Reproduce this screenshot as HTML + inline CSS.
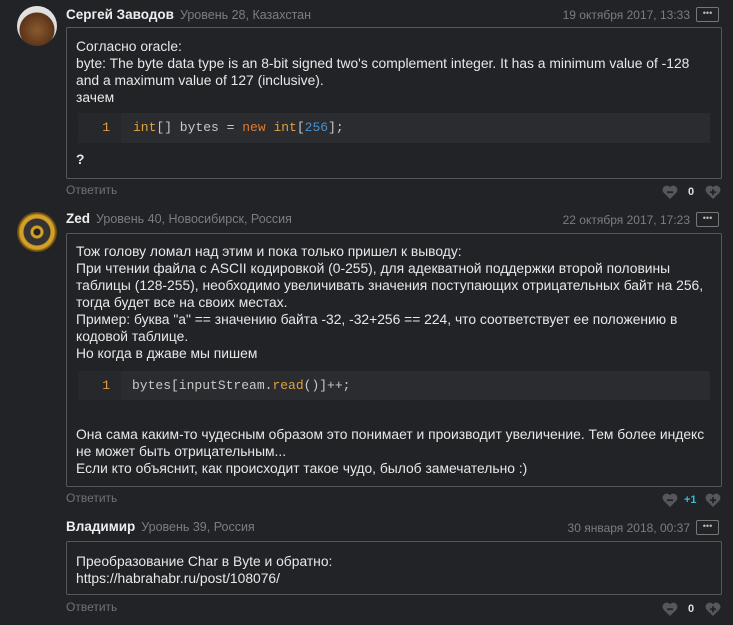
<!DOCTYPE html>
<html><head><meta charset="utf-8"><style>
*{margin:0;padding:0;box-sizing:border-box}
body{width:733px;height:625px;background:#222327;font-family:"Liberation Sans",Arial,sans-serif;color:#e6e6e6;position:relative;overflow:hidden}
.a{position:absolute}
.name{font-weight:bold;font-size:13.5px;color:#eee}
.meta{font-size:12.5px;color:#7b7d82;margin-left:6px;font-weight:normal}
.date{font-size:12px;color:#7b7d82;text-align:right}
.dots{border:1px solid #777;border-radius:2px;width:23px;height:15px;color:#bbb;font-size:9px;text-align:center;line-height:11px;letter-spacing:0}
.box{border:1px solid #55565a;border-radius:2px;background:#222327}
.t{font-size:13.85px;line-height:17px;color:#e8e8e8;left:76px;white-space:nowrap}
.code{background:#2b2c30;border-radius:2px;font-family:"Liberation Mono",monospace;font-size:13px;color:#c8c8c8}
.g{position:absolute;left:0;top:0;bottom:0;width:43px;background:#27282b;color:#e0a040;text-align:right;padding-right:11px}
.rep{font-size:12px;color:#70727a}
.v{font-size:11px;font-weight:bold;color:#dde}
</style></head><body>
<svg width="0" height="0" style="position:absolute"><defs>
<symbol id="hm" viewBox="0 0 16 14"><path d="M8 14 L1.5 7.5 A4 4 0 0 1 8 2.2 A4 4 0 0 1 14.5 7.5 Z" fill="#56575c"/><rect x="5" y="6.3" width="6" height="1.8" fill="#222327"/></symbol>
<symbol id="hp" viewBox="0 0 16 14"><path d="M8 14 L1.5 7.5 A4 4 0 0 1 8 2.2 A4 4 0 0 1 14.5 7.5 Z" fill="#56575c"/><rect x="5" y="6.3" width="6" height="1.8" fill="#222327"/><rect x="7.1" y="4.2" width="1.8" height="6" fill="#222327"/></symbol>
</defs></svg>

<!-- comment 1 -->
<div class="a" style="left:17px;top:6px;width:40px;height:40px;border-radius:50%;background:radial-gradient(circle at 50% 60%,#8a5a30,#5a3418 55%,#ddd 57%,#eee);"></div>
<div class="a name" style="left:66px;top:7px">Сергей Заводов<span class="meta">Уровень 28, Казахстан</span></div>
<div class="a date" style="left:480px;top:8px;width:210px">19 октября 2017, 13:33</div>
<div class="a dots" style="left:696px;top:7px">•••</div>
<div class="a box" style="left:66px;top:27px;width:656px;height:152px"></div>
<div class="a t" style="top:38px">Согласно oracle:<br>byte: The byte data type is an 8-bit signed two's complement integer. It has a minimum value of -128<br>and a maximum value of 127 (inclusive).<br>зачем</div>
<div class="a code" style="left:78px;top:113px;width:632px;height:30px;line-height:30px"><div class="g">1</div><span style="position:absolute;left:55px"><span style="color:#e0a040">int</span>[] bytes = <span style="color:#e07a30">new</span> <span style="color:#e0a040">int</span>[<span style="color:#4a90d0">256</span>];</span></div>
<div class="a t" style="top:151px;font-weight:bold">?</div>
<div class="a rep" style="left:66px;top:183px">Ответить</div>
<svg class="a" style="left:662px;top:185px" width="16" height="14"><use href="#hm"/></svg>
<div class="a v" style="left:688px;top:186px">0</div>
<svg class="a" style="left:705px;top:185px" width="16" height="14"><use href="#hp"/></svg>

<!-- comment 2 -->
<div class="a" style="left:17px;top:212px;width:40px;height:40px;border-radius:50%;background:radial-gradient(circle,#222 0 3px,#d4a028 4px 6px,#333 7px 13px,#d4a028 14px 17px,#6a4c10 19px)"></div>
<div class="a name" style="left:66px;top:211px">Zed<span class="meta">Уровень 40, Новосибирск, Россия</span></div>
<div class="a date" style="left:480px;top:213px;width:210px">22 октября 2017, 17:23</div>
<div class="a dots" style="left:696px;top:212px">•••</div>
<div class="a box" style="left:66px;top:233px;width:656px;height:254px"></div>
<div class="a t" style="top:243px">Тож голову ломал над этим и пока только пришел к выводу:<br>При чтении файла с ASCII кодировкой (0-255), для адекватной поддержки второй половины<br>таблицы (128-255), необходимо увеличивать значения поступающих отрицательных байт на 256,<br>тогда будет все на своих местах.<br>Пример: буква "а" == значению байта -32, -32+256 == 224, что соответствует ее положению в<br>кодовой таблице.<br>Но когда в джаве мы пишем</div>
<div class="a code" style="left:78px;top:371px;width:632px;height:29px;line-height:29px"><div class="g">1</div><span style="position:absolute;left:54px">bytes[inputStream.<span style="color:#e0a040">read</span>()]++;</span></div>
<div class="a t" style="top:426px">Она сама каким-то чудесным образом это понимает и производит увеличение. Тем более индекс<br>не может быть отрицательным...<br>Если кто объяснит, как происходит такое чудо, былоб замечательно :)</div>
<div class="a rep" style="left:66px;top:491px">Ответить</div>
<svg class="a" style="left:662px;top:493px" width="16" height="14"><use href="#hm"/></svg>
<div class="a v" style="left:684px;top:494px;color:#39b8d8">+1</div>
<svg class="a" style="left:705px;top:493px" width="16" height="14"><use href="#hp"/></svg>

<!-- comment 3 -->
<div class="a name" style="left:66px;top:519px">Владимир<span class="meta">Уровень 39, Россия</span></div>
<div class="a date" style="left:480px;top:521px;width:210px">30 января 2018, 00:37</div>
<div class="a dots" style="left:696px;top:520px">•••</div>
<div class="a box" style="left:66px;top:541px;width:656px;height:54px"></div>
<div class="a t" style="top:553px">Преобразование Char в Byte и обратно:<br>https://habrahabr.ru/post/108076/</div>
<div class="a rep" style="left:66px;top:600px">Ответить</div>
<svg class="a" style="left:662px;top:602px" width="16" height="14"><use href="#hm"/></svg>
<div class="a v" style="left:688px;top:603px">0</div>
<svg class="a" style="left:705px;top:602px" width="16" height="14"><use href="#hp"/></svg>
</body></html>
